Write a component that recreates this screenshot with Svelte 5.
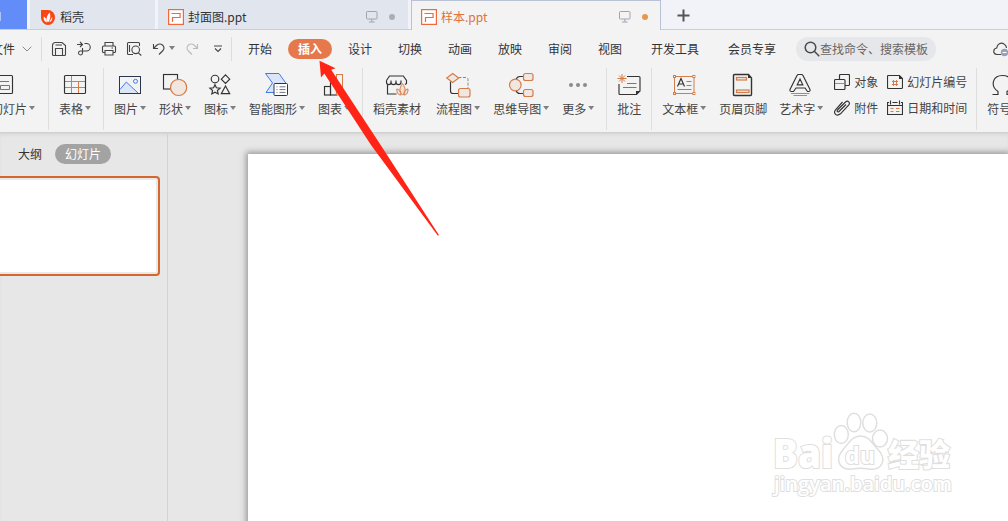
<script>
  const menus = ['开始', '插入', '设计', '切换', '动画', '放映', '审阅', '视图', '开发工具', '会员专享'];
  const groups = [
    [{ label: '表格', icon: 'table', caret: true }],
    [
      { label: '图片', icon: 'picture', caret: true },
      { label: '形状', icon: 'shape', caret: true },
      { label: '图标', icon: 'icons', caret: true },
      { label: '智能图形', icon: 'smart', caret: true },
      { label: '图表', icon: 'chart', caret: true }
    ],
    [
      { label: '稻壳素材', icon: 'store', wide: true },
      { label: '流程图', icon: 'flow', caret: true },
      { label: '思维导图', icon: 'mind', caret: true },
      { label: '更多', icon: 'more', caret: true }
    ],
    [{ label: '批注', icon: 'note' }],
    [
      { label: '文本框', icon: 'textbox', caret: true },
      { label: '页眉页脚', icon: 'header' },
      { label: '艺术字', icon: 'wordart', caret: true }
    ]
  ];
</script>

{#snippet ppt()}
  <svg class="ppt" width="16" height="16" viewBox="0 0 16 16"><rect x=".6" y=".6" width="14.8" height="14.8" fill="#fff" stroke="#f0683c" stroke-width="1.2" /><path d="M3.500 4.500h8.600v4H4.500V13" fill="none" stroke="#f0683c" stroke-width="1.200" /></svg>
{/snippet}

{#snippet screen()}
  <svg class="screen" width="12" height="12" viewBox="0 0 12 12" fill="none" stroke="#a0a4ae"><rect x=".5" y=".5" width="10.500" height="7.500" rx=".8" /><path d="M5.800 8v2.800M3 11h5.600" /></svg>
{/snippet}

{#snippet art(name)}
  {#if name === 'table'}
    <path class="o" d="M3 10.500h20M3 16.500h20M9.500 5v17M16.500 10.500V22" /><rect class="k" x="2.500" y="4.500" width="21" height="18" rx="1" />
  {:else if name === 'picture'}
    <path d="M3 19 9.500 11.500 21 22.500H3Z" fill="#dbe6f7" /><path d="M3 18.500 9.300 11 21 22" stroke="#3f7af0" /><circle cx="18.500" cy="10.300" r="2" stroke="#3f7af0" /><rect x="2.500" y="5.500" width="21" height="17" stroke="#28364f" />
  {:else if name === 'shape'}
    <rect class="k" x="1.500" y="3.500" width="14" height="14.500" /><circle class="of" cx="16.600" cy="16.400" r="8.100" />
  {:else if name === 'icons'}
    <circle class="k" cx="8" cy="8" r="3.800" /><path class="k" d="m18.500 3.900 4.200 4.300-4.200 4.300-4.200-4.300ZM18.500 15l4.200 7.600h-8.400ZM8 13.700l1.400 3.100 3.700.4-2.700 2.300.8 3.400L8 21.200l-3.200 1.700.8-3.400-2.700-2.300 3.700-.4Z" />
  {:else if name === 'smart'}
    <path d="M1.500 2.500H15L22.500 13v6L15 21.500H2L8.500 12Z" fill="#dbe5f7" stroke="#3f7af0" /><rect x="10" y="12.500" width="13.500" height="12" rx="1" fill="#fff" stroke="#28364f" /><path d="M12.500 15.800h1M15.500 15.800h6M12.500 18.600h1M15.500 18.600h6M12.500 21.400h1M15.500 21.400h6" stroke="#6b7382" />
  {:else if name === 'chart'}
    <rect class="k" x="3.500" y="15.500" width="6" height="8.500" /><rect class="k" x="9.500" y="9.500" width="6" height="14.500" /><rect class="o" x="15.500" y="3.500" width="6" height="20.500" />
  {:else if name === 'store'}
    <path class="k" d="M13.500 23h-9V14M3.500 9.500 6.500 5h13.800l3.200 4.500v3l-1.500 1M3.500 9.500v1.500c0 3.500 4.500 3.500 4.500 0 0 3.500 5 3.500 5 0 0 3.500 5 3.500 5 0M8 9.500v2M13 9.500v2M18 9.500v2" />
    <path class="leaf" d="M19.500 24c-3.500-3-3.500-6 0-11.500 3.500 5.500 3.500 8.500 0 11.500ZM18 24c-3.500 0-4.200-3-4.200-6 2.700.5 4 2 4.200 6ZM20.800 24c3.500 0 4.200-3 4.200-6-2.700.5-4 2-4.200 6Z" />
  {:else if name === 'flow'}
    <path class="k" d="M5.500 10.500V20q0 2.500 2.500 2.500h5.500" /><path d="M13.500 6.500H21q2 0 2 2V17" stroke="#888" stroke-dasharray="3 1.500" /><path class="of" d="m7.700 2.500 6 4.500-6 4.500-6-4.500Z" /><rect class="of" x="13.500" y="17.500" width="11.500" height="8.500" rx="2" />
  {:else if name === 'mind'}
    <path class="k" d="M15 5.500h-3q-3 0-4 3M15 22.500h-3q-3 0-4-3" /><circle class="of" cx="7.300" cy="14" r="5.800" /><rect class="of" x="15.500" y="2.500" width="9.500" height="7" rx="2" /><rect class="of" x="15.500" y="18.500" width="9.500" height="7" rx="2" />
  {:else if name === 'more'}
    <g fill="#8b8b8b"><circle cx="6" cy="14" r="2" /><circle cx="13" cy="14" r="2" /><circle cx="20" cy="14" r="2" /></g>
  {:else if name === 'note'}
    <path class="k" d="M12 5.500h12q1 0 1 1V20l-3.500 3.500H5q-1 0-1-1V13" /><path d="M21 24V20h4Z" fill="#333" /><path d="M12 12.500h9.500M8 16.500h13.500" stroke="#777" /><path class="o" d="M7 3v9M2.500 7.500h9M4 4.500l6 6M10 4.500l-6 6" />
  {:else if name === 'textbox'}
    <rect class="o" x="3.500" y="5.500" width="19.500" height="17" /><g class="o" fill="#f3f3f3"><rect x="2.500" y="4.500" width="2" height="2" /><rect x="21.900" y="4.500" width="2" height="2" /><rect x="2.500" y="21.500" width="2" height="2" /><rect x="21.900" y="21.500" width="2" height="2" /></g><path class="k" d="M6.500 15.500 10 7.500l3.500 8M7.700 13h4.600" /><path d="M15.500 10.500h5M15.500 14.500h5M6.500 18.500h14" stroke="#888" />
  {:else if name === 'header'}
    <path class="k bold" d="M5.500 3.500h14l3 3.500v16.500q0 1-1 1h-16q-1 0-1-1v-19q0-1 1-1Z" /><path d="M19 3.500v3.500h3.500Z" fill="#333" /><rect class="of" x="7.500" y="6.500" width="10" height="2.500" /><rect class="of" x="7.500" y="19" width="12.500" height="2.500" />
  {:else if name === 'wordart'}
    <path class="k" d="M10.500 3.500h3q1 0 1.500 1l7 14q.5 2-1.500 2h-1l-2.500-3.500h-9L5.500 20.500h-2q-2 0-1.500-2l7-14q.5-1 1.500-1ZM12 8l2.800 5.800H9.200Z" /><path class="o" d="M3 22.500h18.500M5.500 24.500h13.500" />
  {/if}
{/snippet}

<div class="app">
  <div class="tabs">
    <div class="home"><span></span></div>
    <div class="tab docer">
      <svg width="14" height="15" viewBox="0 0 14 15"><path d="M0 0h7a7 7.500 0 1 1-7 7.500Z" fill="#fa4614" /><path d="M7 12.500C4.500 9.500 5.500 6 8.800 2.500c.9 4 .8 7-1.800 10ZM6 12.500C3 11.500 2.300 9 2.800 6.500 5 8 5.800 9.800 6 12.500ZM8.200 12.300c.8-1.300 1.700-3 2.900-5.300.6 2.500-.5 4.500-2.900 5.300Z" fill="#fff" /></svg>
      稻壳
    </div>
    <div class="tab file">{@render ppt()}<span>封面图.ppt</span>{@render screen()}<i class="dot"></i></div>
    <div class="tab file active">{@render ppt()}<span>样本.ppt</span>{@render screen()}<i class="dot"></i></div>
    <div class="add"><svg width="13" height="13" viewBox="0 0 13 13"><path d="M6.500 .5v12M.5 6.500h12" stroke="#555" stroke-width="2" /></svg></div>
  </div>

  <div class="menubar">
    <div class="filemenu"><span>文件</span><svg width="10" height="6" viewBox="0 0 10 6" fill="none" stroke="#8a8a8a"><path d="m.7.7 4.300 4.300 4.300-4.300" /></svg></div>
    <div class="quick">
      <svg width="16" height="16" viewBox="0 0 16 16"><path d="M1.500 4.500q0-3 3-3H11l3.500 3v9q0 1-1 1h-11q-1 0-1-1ZM4.500 14V7.500h7V14M4.500 4h6.500" /></svg>
      <svg width="16" height="16" viewBox="0 0 16 16"><path d="M1 3.500h5M4 1l2.500 2.500L4 6M8.500 2.500h2a3.700 3.700 0 0 1 0 7.500H4a2 2 0 1 0 2.500 2V7" /></svg>
      <svg width="16" height="16" viewBox="0 0 16 16"><path d="M4 5V1.500h8V5M4 11.500H2.500q-1 0-1-1V6q0-1 1-1h11q1 0 1 1v4.500q0 1-1 1H12M4 9.500h8v4.500H4ZM10.500 7H12" /></svg>
      <svg width="16" height="16" viewBox="0 0 16 16"><path d="M7 13.500H2.500q-1 0-1-1v-10q0-1 1-1h10q1 0 1 1V5M3.500 4v7M12.300 11.800l3 2.700" /><circle cx="9.700" cy="8.800" r="3.800" /></svg>
      <svg class="undo" width="14" height="16" viewBox="0 0 14 16"><path d="M1.500 3v4.500h4.500M1.500 7.500 5 4q3-2 5.500 0 3 3 0 6L7 13.500" /></svg>
      <i class="caret"></i>
      <svg class="redo" width="14" height="16" viewBox="0 0 14 16"><path d="M12.500 3v4.500H8M12.500 7.500 9 4Q6 2 3.500 4q-3 3 0 6L7 13.500" /></svg>
      <svg class="down" width="8" height="8" viewBox="0 0 8 8"><path d="M0 1h8M1 3.500l3 3 3-3" /></svg>
    </div>
    <nav>
      {#each menus as m}
        <span class:selected={m === '插入'} class:long={m.length > 2}>{m}</span>
      {/each}
    </nav>
    <div class="search"><svg width="16" height="16" viewBox="0 0 16 16" fill="none" stroke="#4a4a4a" stroke-width="1.500"><circle cx="6.500" cy="6.500" r="5.300" /><path d="m10.300 10.300 5 5" /></svg>查找命令、搜索模板</div>
    <svg class="cloud" width="15" height="16" viewBox="0 0 15 16" fill="none"><path d="M8 13.500H4C-.5 13 0 7.500 3.700 7 4 3 8 1 11 3c1.700 1 2.500 2.500 2.500 4" stroke="#444" stroke-width="1.200" /><circle cx="11.500" cy="11.500" r="3.700" fill="#95a0b5" /><path d="M9.500 11.500h4" stroke="#fff" stroke-width="1.200" /></svg>
  </div>

  <div class="ribbon">
    <div class="group first">
      <div class="item"><svg width="27" height="28" viewBox="0 0 27 28"><path class="k" d="M0 4.500h15.500q1 0 1 1v16q0 1-1 1H0" /><path d="M3 10.500h10M4.500 14.500h9v4h-9Z" stroke="#777" /></svg><div class="label">幻灯片<i class="caret"></i></div></div>
    </div>
    {#each groups as g, n}
      <div class="group" class:last={n === 4} class:comment={n === 3}>
        {#each g as it}
          <div class="item" class:wide={it.wide}>
            <svg width={it.caret ? 27 : 28} height="28" viewBox={it.caret ? '0 0 27 28' : '0 0 28 28'}>{@render art(it.icon)}</svg>
            <div class="label">{it.label}{#if it.caret}<i class="caret"></i>{/if}</div>
          </div>
        {/each}
      </div>
    {/each}
    <div class="small">
      <div><svg width="16" height="16" viewBox="0 0 16 16"><path class="k" d="M5.500 5V1.500q0-1 1-1h8q1 0 1 1v9q0 1-1 1H11M1.500 5.500h8.500q1 0 1 1v8q0 1-1 1H1.500q-1 0-1-1v-8q0-1 1-1Z" /><path class="o" d="M1 9.500h9.500" /></svg>对象</div>
      <div><svg width="16" height="16" viewBox="0 0 16 16"><path class="k" d="M1.500 1.500h11l3 3v9q0 1-1 1h-13q-1 0-1-1v-11q0-1 1-1Z" /><path d="M12 1v4h4Z" fill="#333" /><path class="o" d="M5 7.500h6M5 10.500h6M6.500 6v6M9.500 6v6" /></svg>幻灯片编号</div>
      <div><svg width="16" height="16" viewBox="0 0 16 16"><path class="k" d="m12 4.500-7 7c-1.200 1-2.500-.2-1.500-1.500l8-8c2.500-2 5 .5 3.300 3L6.500 13.800c-4 3-7.500-.3-5-4L8.500 2" /></svg>附件</div>
      <div><svg width="16" height="16" viewBox="0 0 16 16"><path class="k" d="M2 2.500H.5v12h15v-12H14M5.500 2.500h5M3.500 .5v4M12.500 .5v4M1 5.500h14" /><path class="o" d="M3.500 8.500h3M9 8.500h3.500M3.500 11.500h3M9 11.500h3.500" /></svg>日期和时间</div>
    </div>
    <div class="group symbol">
      <div class="item"><svg width="27" height="28" viewBox="0 0 27 28"><path class="k" d="M2.500 23.500H8v-3C0 15 2.500 4.500 12.500 4.500S25 15 17 20.500v3h5.500" /></svg><div class="label">符号<i class="caret"></i></div></div>
    </div>
  </div>

  <div class="work">
    <aside>
      <div class="switch"><span>大纲</span><b>幻灯片</b></div>
      <div class="thumb"><div></div></div>
    </aside>
    <main><div class="slide"></div></main>
  </div>

  <svg class="arrow" width="122" height="178" viewBox="318 59 122 178"><path d="m319.500 60.700 16 7.600-4.300 1.400L380 144 438.900 235l-1 .8L371 145 324.300 73.500 321 77.500Z" fill="#ff2416" /></svg>

  <svg class="mark" width="190" height="96" viewBox="768 405 190 96">
    <g fill="#fff" stroke="#dfdfdf" stroke-width="2.200">
      <text x="773" y="468" font-size="40" font-weight="800" textLength="60" lengthAdjust="spacingAndGlyphs">Bai</text>
      <g stroke-width="1.500"><ellipse cx="841.300" cy="434.500" rx="7" ry="9" /><ellipse cx="854" cy="422.500" rx="6.800" ry="9.300" /><ellipse cx="869.800" cy="423" rx="7" ry="9" /><ellipse cx="880" cy="438.500" rx="7.500" ry="8.500" />
      <path d="M860.500 436c9 0 12 8 17 13 10 10 5 22-9 20-5-.8-11-.8-16 0-14 1.500-18-10-9-20 5-5 8-13 17-13Z" /></g>
      <text x="845" y="464" font-size="23" font-weight="700" textLength="30" lengthAdjust="spacingAndGlyphs">du</text>
      <text class="cjk" x="888" y="466" font-size="31" font-weight="900" textLength="62" lengthAdjust="spacingAndGlyphs">经验</text>
      <text x="774" y="491" font-size="20" font-weight="600" stroke-width="2" textLength="178" lengthAdjust="spacingAndGlyphs">jingyan.baidu.com</text>
    </g>
  </svg>
</div>

<style>
  :global(body) { margin: 0; overflow: hidden; }
  .app { position: relative; width: 1008px; height: 521px; overflow: hidden; background: #f3f3f3; color: #333; font: 12px/16px 'Noto Sans CJK SC', sans-serif; display: flex; flex-direction: column; white-space: nowrap; }
  .app * { box-sizing: border-box; }
  svg { display: block; flex: none; fill: none; }
  .tabs { height: 30px; flex: none; display: flex; background: #f2f3f8; box-shadow: inset 0 -1px #c9cede; }
  .home { width: 27px; height: 29px; background: #628cf7; padding-top: 12px; }
  .home span { display: block; width: 1px; height: 9px; background: #aec4ff; }
  .tab { height: 29px; margin-left: 3px; display: flex; align-items: center; background: #e1e5ee; padding-top: 5px; }
  .docer { width: 125px; padding-left: 11px; gap: 5px; }
  .file { width: 250px; padding-left: 10px; }
  .file span { margin-left: 4px; }
  .screen { margin-left: auto; }
  .dot { width: 6px; height: 6px; border-radius: 50%; background: #aaaeb7; margin: 0 13px 0 12px; }
  .active { height: 30px; border: 1px solid #b9c1d5; border-bottom: 0; background: #f3f3f3; color: #df713c; padding: 3px 0 0 9px; }
  .file .dot { margin-left: 11px; }
  .active .dot { background: #e5994f; margin-right: 12px; }
  .add { padding: 9px 0 0 16px; }
  .menubar { height: 37px; flex: none; display: flex; align-items: center; padding-top: 1px; }
  .filemenu { width: 42px; height: 24px; display: flex; align-items: center; border-right: 1px solid #dcdcdc; }
  .filemenu span { margin: 0 7px 0 -9px; }
  .quick { width: 190px; height: 24px; display: flex; align-items: center; border-right: 1px solid #dcdcdc; padding-left: 9px; gap: 9px; }
  .quick svg { stroke: #444; stroke-width: 1.1; }
  .quick .undo { margin-left: 1px; }
  .quick .caret { margin-left: -6px; }
  .quick .redo { stroke: #bbb; margin-left: 1px; }
  .quick .down { margin-left: 6px; }
  nav { display: flex; gap: 6px; margin-left: 6px; }
  nav span { padding: 2px 10px; height: 20px; border-radius: 10px; }
  nav .long { margin-left: 3px; }
  nav .selected { background: #e6794b; color: #fff; font-weight: 700; }
  .search { display: flex; align-items: center; width: 140px; height: 24px; border-radius: 12px; background: #e6e7ea; margin-left: 10px; padding-left: 8px; color: #666; }
  .cloud { margin-left: 57px; }
  .ribbon { height: 65px; flex: none; display: flex; padding-top: 1px; }
  .group { display: flex; flex: none; gap: 12px; height: 62px; padding: 3px 11px 0 10px; border-right: 1px solid #dedede; }
  .comment { padding-right: 10px; }
  .comment .item { width: 24px; }
  .first { width: 49px; justify-content: flex-end; padding-right: 12px; }
  .first svg { margin-right: 7px; }
  .last { padding-right: 10px; border: 0; }
  .item { display: flex; flex-direction: column; align-items: center; }
  .wide { margin-right: 3px; }
  .label { display: flex; align-items: center; margin-top: 2px; color: #444; }
  .caret { flex: none; width: 6px; height: 4px; background: #808080; clip-path: polygon(0 0, 100% 0, 50% 100%); margin: -2px 0 0 3px; }
  .label .caret { margin: -2px 1px 0 2px; }
  .k { stroke: #333; stroke-width: 1.15; }
  .bold { stroke-width: 1.4; }
  .o { stroke: #d37d4b; }
  .of { fill: #f1e6e0; stroke: #d37d4b; stroke-width: 1.2; }
  .leaf { fill: #f6ded0; stroke: #d37d4b; stroke-width: 1; }
  .small { flex: none; display: grid; grid-template-columns: 44px 80px; column-gap: 9px; grid-auto-rows: 26px; width: 143px; height: 62px; padding-top: 1px; border-right: 1px solid #dedede; color: #444; }
  .small div { display: flex; align-items: center; gap: 4px; }
  .symbol { border: 0; }
  .work { flex: 1; display: flex; background: #e7e7e7; box-shadow: inset 0 1px #cfcfcf, inset 0 4px 4px -2px #d0d0d0; }
  aside { width: 168px; flex: none; border-right: 1px solid #d3d3d3; padding-top: 12px; }
  .switch { display: flex; align-items: center; gap: 13px; padding-left: 18px; }
  .switch b { font-weight: 400; color: #fff; background: #a3a3a3; border-radius: 10px; padding: 2px 10px; }
  .thumb { width: 164px; height: 100px; margin: 12px 0 0 -4px; border: 2px solid #d4672d; border-radius: 4px; padding: 2px; background: #e9e9e9; }
  .thumb div { height: 100%; background: #fff; }
  main { flex: 1; padding: 22px 0 0 80px; overflow: hidden; }
  .slide { height: 400px; background: #fff; box-shadow: 0 0 6px 2px #999; }
  .arrow { position: absolute; left: 318px; top: 59px; }
  .mark { position: absolute; left: 768px; top: 405px; font-family: 'Open Sans', sans-serif; }
  .mark text { paint-order: stroke; }
  .mark .cjk { font-family: 'Noto Sans CJK SC', sans-serif; }
</style>
